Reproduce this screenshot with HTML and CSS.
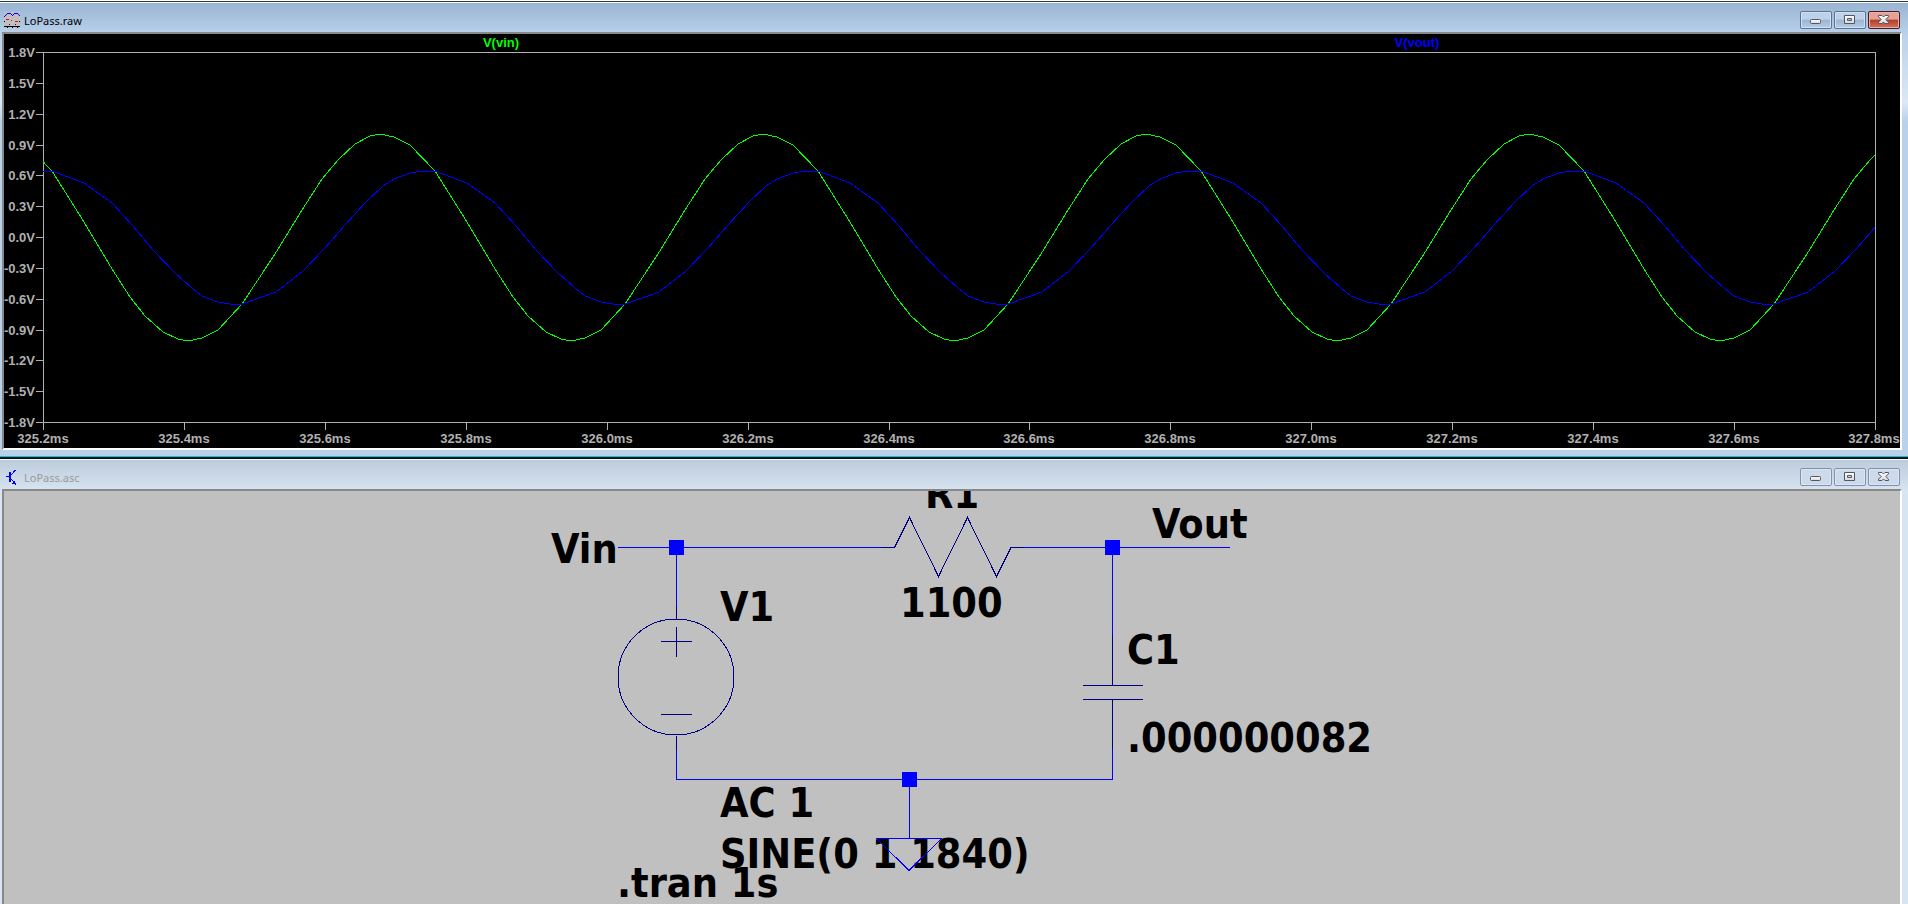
FILE: index.html
```html
<!DOCTYPE html>
<html lang="en">
<head>
<meta charset="utf-8">
<title>LoPass</title>
<link rel="stylesheet" href="styles.css">
</head>
<body>
<svg class="defs" aria-hidden="true">
  <defs>
    <linearGradient id="face" x1="0" y1="0" x2="0" y2="1"><stop offset="0" stop-color="#fff"/><stop offset="1" stop-color="#d8d8d8"/></linearGradient>
    <symbol id="min" viewBox="0 0 12 12"><rect x=".5" y="5.500" width="10" height="4" rx="1" fill="url(#face)" stroke="#535666"/></symbol>
    <symbol id="max" viewBox="0 0 12 12"><path d="M.5 1.500h10v8H.5zM3.500 4.500v2h4v-2z" fill="url(#face)" fill-rule="evenodd" stroke="#535666"/></symbol>
    <symbol id="close" viewBox="0 0 12 12"><path d="M.5 1.500h3.500L5.500 3 7 1.500h3.500v1.300L7.800 5.500l2.700 2.700v1.300H7L5.500 8 4 9.500H.5V8.200l2.700-2.700L.5 2.800z" fill="url(#face)" stroke="#535666"/></symbol>
  </defs>
</svg>
<main class="workspace">
  <section class="window active" aria-label="LoPass.raw">
    <header class="titlebar">
      <svg class="app-icon" viewBox="0 0 16 16" shape-rendering="crispEdges" aria-hidden="true">
        <path fill="#c0c0c0" d="M0 0h16v16H0z"/>
        <path fill="#00f" d="M0 4h1v1H0zM1 3h1v1H1zM2 2h1v1H2zM3 1h4v1H3zM7 2h1v1H7zM8 3h1v1H8zM9 2h1v1H9zM10 1h4v1h-4zM14 2h1v1h-1zM15 3h1v1h-1z"/>
        <path fill="red" d="M2 7h3v1H2zM7 8h1v1H7zM11 9h3v1h-3z"/>
        <path fill="#000" d="M0 9h1v1H0zM15 9h1v1h-1zM0 14h16v1H0zM3 15h1v1H3zM8 15h1v1H8zM13 15h1v1h-1z"/>
        <path fill="#00f" d="M5 12h1v1H5zM11 12h1v1h-1z"/>
      </svg>
      <h1 class="title">LoPass.raw</h1>
      <button class="control" aria-label="Minimize"><svg class="glyph"><use href="#min"/></svg></button>
      <button class="control" aria-label="Maximize"><svg class="glyph"><use href="#max"/></svg></button>
      <button class="control close" aria-label="Close"><svg class="glyph"><use href="#close"/></svg></button>
    </header>
    <div class="pane plot-pane">
      <svg class="plot" viewBox="4 34 1896 414" role="img" aria-label="Voltage over time">
        <defs>
          <clipPath id="area"><rect x="43" y="52" width="1832" height="370"/></clipPath>
          <path id="vin" d="M52 171 84 222 112 269 130 297 145 316 163 332 178 339 188 341 202 338 218 330 242 304 275 254 302 210 322 179 338 160 355 144 370 136 380 134 394 137 410 145 435 171"/>
          <path id="vout" d="M52 171 84 183 112 203 133 226 153 250 175 273 192 288 202 296 218 302 230 304 242 304 276 292 303 271 325 248 345 225 366 202 383 186 394 179 410 173 422 171 435 171"/>
        </defs>
        <g class="axis">
          <path d="M43.500 430V52.500H1875.500V430M36 52.500h8M36 83.500h8M36 114.500h8M36 145.500h8M36 175.500h8M36 206.500h8M36 237.500h8M36 268.500h8M36 299.500h8M36 330.500h8M36 360.500h8M36 391.500h8M36 422.500H1875M184.500 422v8M325.500 422v8M466.500 422v8M607.500 422v8M748.500 422v8M889.500 422v8M1029.500 422v8M1170.500 422v8M1311.500 422v8M1452.500 422v8M1593.500 422v8M1734.500 422v8"/>
        </g>
        <g clip-path="url(#area)">
          <g class="trace vin"><use href="#vin" x="-383"/><use href="#vin"/><use href="#vin" x="383"/><use href="#vin" x="766"/><use href="#vin" x="1149"/><use href="#vin" x="1532"/></g>
          <g class="trace vout"><use href="#vout" x="-383"/><use href="#vout"/><use href="#vout" x="383"/><use href="#vout" x="766"/><use href="#vout" x="1149"/><use href="#vout" x="1532"/></g>
        </g>
        <g class="label volts">
          <text x="35" y="57">1.8V</text><text x="35" y="88">1.5V</text><text x="35" y="119">1.2V</text><text x="35" y="150">0.9V</text><text x="35" y="180">0.6V</text><text x="35" y="211">0.3V</text><text x="35" y="242">0.0V</text><text x="35" y="273">-0.3V</text><text x="35" y="304">-0.6V</text><text x="35" y="335">-0.9V</text><text x="35" y="365">-1.2V</text><text x="35" y="396">-1.5V</text><text x="35" y="427">-1.8V</text>
        </g>
        <g class="label times">
          <text x="43" y="443">325.2ms</text><text x="184" y="443">325.4ms</text><text x="325" y="443">325.6ms</text><text x="466" y="443">325.8ms</text><text x="607" y="443">326.0ms</text><text x="748" y="443">326.2ms</text><text x="889" y="443">326.4ms</text><text x="1029" y="443">326.6ms</text><text x="1170" y="443">326.8ms</text><text x="1311" y="443">327.0ms</text><text x="1452" y="443">327.2ms</text><text x="1593" y="443">327.4ms</text><text x="1734" y="443">327.6ms</text><text x="1874" y="443">327.8ms</text>
        </g>
        <g class="label times"><text class="name-vin" x="501" y="47">V(vin)</text><text class="name-vout" x="1417" y="47">V(vout)</text></g>
      </svg>
    </div>
  </section>

  <section class="window inactive" aria-label="LoPass.asc">
    <header class="titlebar">
      <svg class="app-icon" viewBox="0 0 16 16" shape-rendering="crispEdges" aria-hidden="true">
        <path fill="#00f" d="M5 3h2v10H5zM2 7h3v1H2zM10 12h1v3H8v-1h2z"/>
        <path fill="none" stroke="#00f" d="M6.500 6.500l5-5.500M6.500 9.500l5.500 6"/>
      </svg>
      <h2 class="title">LoPass.asc</h2>
      <button class="control" aria-label="Minimize"><svg class="glyph"><use href="#min"/></svg></button>
      <button class="control" aria-label="Maximize"><svg class="glyph"><use href="#max"/></svg></button>
      <button class="control" aria-label="Close"><svg class="glyph"><use href="#close"/></svg></button>
    </header>
    <div class="pane schematic-pane">
      <svg class="schematic" viewBox="4 491 1896 413" role="img" aria-label="RC low-pass filter schematic">
        <g class="value">
          <text x="551" y="563">Vin</text>
          <text x="720" y="621">V1</text>
          <text x="925" y="508">R1</text>
          <text x="900" y="617">1100</text>
          <text x="1152" y="538">Vout</text>
          <text x="1127" y="664">C1</text>
          <text x="1127" y="752">.000000082</text>
          <text x="720" y="817">AC 1</text>
          <text x="720" y="868">SINE(0 1 1840)</text>
          <text x="617" y="897">.tran 1s</text>
        </g>
        <g class="wire">
          <path d="M618 547.500H882M1022 547.500H1230M676.500 547v60M676.500 749v30.500H1112.500V748M1112.500 547v88M909.500 780v58M876.500 838.500h65l-32.500 32z"/>
        </g>
        <g class="part">
          <path d="M881 547.500h13.500l15-30 29 59 29-59 29 59 14.500-29H1024M676.500 606v13M676.500 736v14M661 641.500h31M676.500 627v30M661 714.500h31M1112.500 635v50M1083 685.500h60M1083 699.500h60M1112.500 699v50"/>
          <circle cx="676" cy="677" r="58"/>
        </g>
        <g class="node"><rect x="669" y="540" width="15" height="15"/><rect x="1105" y="540" width="15" height="15"/><rect x="902" y="772" width="15" height="15"/></g>
      </svg>
    </div>
  </section>
</main>
</body>
</html>
```
FILE: styles.css
```css
* { box-sizing: border-box; }

body {
  margin: 0;
  background: #fff;
  font-family: "Noto Sans", "Open Sans", sans-serif;
}

.defs { position: absolute; width: 0; height: 0; }

.workspace {
  display: flex;
  flex-direction: column;
  height: 100vh;
  padding-top: 1px;
  overflow: hidden;
}

.window {
  display: flex;
  flex-direction: column;
  border-top: 1px solid #2b3a3a;
  padding: 0 6px 6px 2px;
}

.active {
  flex: none;
  background: linear-gradient(#98b4d2, #b9d1ea 32px, #dce8f5 100px, #b9d1ea 120px);
  box-shadow: inset 0 1px #fff;
  border-bottom: 1px solid #00c8e0;
}

.inactive {
  flex: 1;
  min-height: 0;
  padding-bottom: 0;
  border-top: 2px solid #111;
  background: linear-gradient(#bccbda, #d7e4f2 32px, #d7e4f2);
  box-shadow: inset 0 1px #f4f8fc;
}

.titlebar {
  display: flex;
  flex: none;
  align-items: center;
  gap: 2px;
  height: 30px;
  padding: 6px 2px 0 2px;
}

.app-icon { flex: none; width: 16px; height: 16px; }

.title {
  flex: 1;
  margin: 0 0 0 2px;
  padding-top: 1px;
  font-size: 11px;
  line-height: 18px;
  font-weight: 400;
  color: #000;
}

.inactive .title { color: #999; }

.control {
  display: grid;
  place-items: center;
  width: 32px;
  height: 18px;
  padding: 0;
  border: 1px solid #5d7391;
  border-radius: 2px;
  background: linear-gradient(#bdd2e9 45%, #9ab5d2 50%, #b5cde6);
  box-shadow: inset 0 0 0 1px #cfe0f2;
}

.inactive .control {
  border-color: #8391ae;
  background: #cddaea;
  box-shadow: inset 0 0 0 1px #dbe6f3;
}

.active .close {
  border-color: #4f1620;
  background: linear-gradient(#e2a396 45%, #b83c22 50%, #cf7563);
  box-shadow: inset 0 0 0 1px #e8b4a9;
}

.glyph { width: 12px; height: 12px; }

.pane {
  overflow: hidden;
  border: 2px solid;
  border-color: #888 #fff #fff #888;
}

.schematic-pane {
  flex: 1;
  min-height: 0;
  border-bottom: 0;
  background: #c0c0c0;
}

.plot-pane { background: #000; }

.plot, .schematic { display: block; width: 100%; height: auto; }

.axis, .trace, .wire, .part { fill: none; stroke-width: 1; shape-rendering: crispEdges; }
.axis { stroke: #b0b0b0; }
.vin { stroke: #0f0; }
.vout { stroke: #00f; }

.label {
  font: bold 13px "Liberation Sans", Arial, sans-serif;
  fill: #b0b0b0;
}
.volts { text-anchor: end; }
.times { text-anchor: middle; }
.name-vin { fill: #0f0; }
.name-vout { fill: #00f; }

.value { font: bold 41px "DejaVu Sans Condensed", "DejaVu Sans", sans-serif; fill: #000; }
.wire { stroke: #00f; }
.part { stroke: #000080; }
.node { fill: #00f; }
```
